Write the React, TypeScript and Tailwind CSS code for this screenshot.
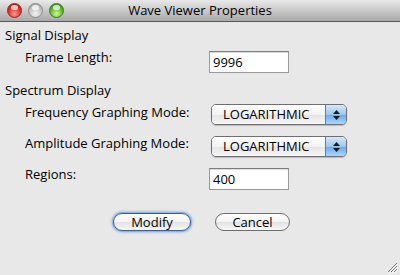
const font = { fontFamily: '"Lucida Grande", "Open Sans", "DejaVu Sans", sans-serif' };

function Light({ color }: { color: "red" | "gray" | "green" }) {
    const bg =
        color === "red"
            ? "bg-[radial-gradient(circle_at_50%_75%,#ff9a90_0%,#e0302a_55%,#8c1410_100%)] border-[#8a2a26]"
            : color === "green"
                ? "bg-[radial-gradient(circle_at_50%_75%,#d0f79a_0%,#5cb82a_55%,#2f6e12_100%)] border-[#3e7a22]"
                : "bg-[radial-gradient(circle_at_50%_75%,#f2f2f2_0%,#c4c4c4_55%,#8a8a8a_100%)] border-[#8c8c8c]";
    return (
        <div className={`relative w-[15px] h-[15px] rounded-full border ${bg}`}>
            <div className="absolute left-[3px] top-[1px] w-[7px] h-[5px] rounded-full bg-white/70" />
        </div>
    );
}

function TextField({ value }: { value: string }) {
    return (
        <div className="w-[80px] h-[22px] bg-white border border-[#9a9a9a] border-t-[#7d7d7d] shadow-[inset_0_1px_1px_rgba(0,0,0,0.15)] pl-[3px] text-[13px] leading-[20px] text-black">
            {value}
        </div>
    );
}

function Popup({ value }: { value: string }) {
    return (
        <div className="flex w-[136px] h-[21px] rounded-[5px] border border-[#6f6f6f] overflow-hidden shadow-[0_1px_1px_rgba(0,0,0,0.2)]">
            <div className="flex-1 bg-[linear-gradient(#ffffff,#f2f2f2_50%,#e4e4e4_51%,#f6f6f6)] text-[13px] leading-[19px] pl-[11px] text-black">
                {value}
            </div>
            <div className="w-[21px] border-l border-[#6a7a9a] bg-[linear-gradient(#d6e8fb,#9cc6f2_50%,#6ba8ea_51%,#a9d6fb)] flex flex-col items-center justify-center gap-[2px]">
                <svg width="7" height="4" viewBox="0 0 7 4"><path d="M3.5 0 L7 4 L0 4 Z" fill="#1a1a1a" /></svg>
                <svg width="7" height="4" viewBox="0 0 7 4"><path d="M0 0 L7 0 L3.5 4 Z" fill="#1a1a1a" /></svg>
            </div>
        </div>
    );
}

export default function App() {
    return (
        <div className="w-[400px] h-[275px] bg-[#e8e8e8] flex flex-col overflow-hidden text-black" style={font}>
            <div className="relative h-[22px] shrink-0 bg-[linear-gradient(#e9e9e9,#c9c9c9_50%,#a8a8a8)] border-b border-[#585858] flex items-center">
                <div className="flex items-center gap-[6px] pl-[7px]">
                    <Light color="red" />
                    <Light color="gray" />
                    <Light color="green" />
                </div>
                <div className="absolute inset-0 flex items-center justify-center text-[13px] text-black">
                    Wave Viewer Properties
                </div>
            </div>

            <div className="flex flex-col text-[13px] leading-[16px]">
                <div className="mt-[5px] pl-[5px]">Signal Display</div>
                <div className="mt-[8px] flex items-start">
                    <div className="w-[209px] pl-[25px] -mt-[2px]">Frame Length:</div>
                    <TextField value="9996" />
                </div>

                <div className="mt-[9px] pl-[5px]">Spectrum Display</div>
                <div className="mt-[6px] flex items-start">
                    <div className="w-[211px] pl-[25px]">Frequency Graphing Mode:</div>
                    <Popup value="LOGARITHMIC" />
                </div>
                <div className="mt-[11px] flex items-start">
                    <div className="w-[211px] pl-[25px] -mt-[1px]">Amplitude Graphing Mode:</div>
                    <Popup value="LOGARITHMIC" />
                </div>
                <div className="mt-[11px] flex items-start">
                    <div className="w-[209px] pl-[25px] -mt-[2px]">Regions:</div>
                    <TextField value="400" />
                </div>

                <div className="mt-[23px] flex pl-[113px] gap-[24px]">
                    <div className="w-[78px] h-[18px] rounded-full border border-[#3a5f95] shadow-[0_0_0_1px_#8fb4e6,0_0_3px_1px_#7aa3dc] bg-[linear-gradient(#ffffff,#f3f3f3_50%,#e2e2e2_51%,#f8f8f8)] flex items-center justify-center text-[13px]">
                        Modify
                    </div>
                    <div className="w-[75px] h-[18px] rounded-full border border-[#6e6e6e] bg-[linear-gradient(#ffffff,#f3f3f3_50%,#e2e2e2_51%,#f8f8f8)] flex items-center justify-center text-[13px]">
                        Cancel
                    </div>
                </div>
            </div>

            <div className="flex-1 flex items-end justify-end pr-[2px] pb-[2px]">
                <svg width="11" height="11" viewBox="0 0 11 11">
                    <path d="M10 1 L1 10 M10 4 L4 10 M10 7 L7 10" stroke="#7a7a7a" strokeWidth="1" />
                    <path d="M11 2 L2 11 M11 5 L5 11 M11 8 L8 11" stroke="#ffffff" strokeWidth="1" />
                </svg>
            </div>
        </div>
    );
}
